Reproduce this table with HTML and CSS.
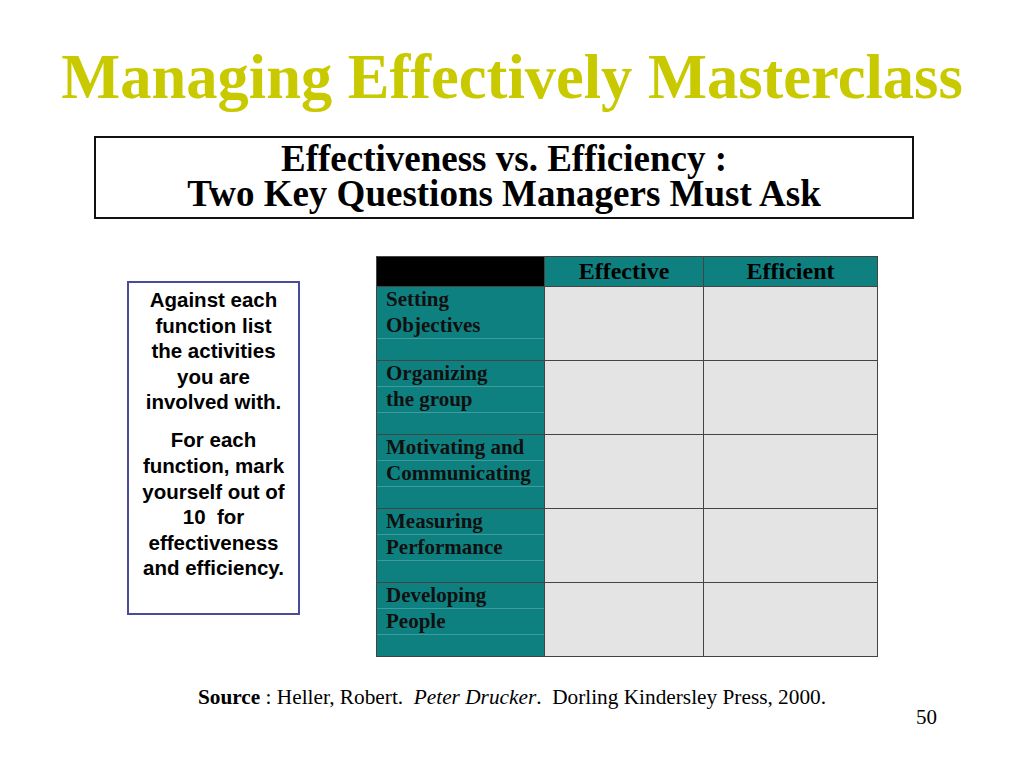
FILE: index.html
```html
<!DOCTYPE html>
<html>
<head>
<meta charset="utf-8">
<link rel="stylesheet" href="styles.css">
</head>
<body>
<div class="slide">
  <h1 class="title">Managing Effectively Masterclass</h1>
  <div class="subtitle">
    <div>Effectiveness vs. Efficiency :</div>
    <div>Two Key Questions Managers Must Ask</div>
  </div>
  <div class="main">
    <div class="note">
      <p>Against each<br>function list<br>the activities<br>you are<br>involved with.</p>
      <p>For each<br>function, mark<br>yourself out of<br>10&nbsp; for<br>effectiveness<br>and efficiency.</p>
    </div>
    <div class="grid">
      <div class="cell hdr-blank"></div>
      <div class="cell hdr">Effective</div>
      <div class="cell hdr">Efficient</div>

      <div class="cell fn first"><div class="sub">Setting</div><div class="sub">Objectives</div><div class="sub"></div></div>
      <div class="cell blank"></div>
      <div class="cell blank"></div>

      <div class="cell fn"><div class="sub">Organizing</div><div class="sub">the group</div><div class="sub"></div></div>
      <div class="cell blank"></div>
      <div class="cell blank"></div>

      <div class="cell fn"><div class="sub">Motivating and</div><div class="sub">Communicating</div><div class="sub"></div></div>
      <div class="cell blank"></div>
      <div class="cell blank"></div>

      <div class="cell fn"><div class="sub">Measuring</div><div class="sub">Performance</div><div class="sub"></div></div>
      <div class="cell blank"></div>
      <div class="cell blank"></div>

      <div class="cell fn"><div class="sub">Developing</div><div class="sub">People</div><div class="sub"></div></div>
      <div class="cell blank"></div>
      <div class="cell blank"></div>
    </div>
  </div>
  <div class="source"><b>Source</b> : Heller, Robert.&nbsp; <i>Peter Drucker</i>.&nbsp; Dorling Kindersley Press, 2000.</div>
  <div class="pagenum">50</div>
</div>
</body>
</html>
```

FILE: styles.css
```css
html, body {
  margin: 0;
  padding: 0;
  background: #ffffff;
}
.slide {
  width: 1024px;
  height: 768px;
  overflow: hidden;
  font-family: "Liberation Serif", "Times New Roman", serif;
  color: #000;
}
.title {
  margin: 0;
  padding-top: 47px;
  font-size: 62.5px;
  line-height: 60px;
  font-weight: bold;
  color: #c9c900;
  text-align: center;
}
.subtitle {
  box-sizing: border-box;
  margin: 29px 0 0 94px;
  width: 820px;
  height: 83px;
  border: 2px solid #111;
  padding-top: 3px;
  font-size: 37px;
  line-height: 35px;
  font-weight: bold;
  text-align: center;
}
.main {
  display: flex;
  align-items: flex-start;
  margin-top: 37px;
}
.note {
  box-sizing: border-box;
  margin: 25px 0 0 127px;
  width: 173px;
  height: 334px;
  border: 2px solid #4b4b9c;
  padding-top: 4px;
  font-family: "Liberation Sans", Arial, sans-serif;
  font-weight: bold;
  font-size: 20.5px;
  line-height: 25.6px;
  text-align: center;
  white-space: nowrap;
}
.note p {
  margin: 0 0 12.4px 0;
}
.grid {
  margin-left: 76px;
  display: grid;
  grid-template-columns: 168px 159px 174px;
  grid-template-rows: 30px repeat(5, 74px);
  border-top: 1px solid #444;
  border-left: 1px solid #444;
}
.cell {
  box-sizing: border-box;
  border-right: 1px solid #444;
  border-bottom: 1px solid #444;
}
.hdr-blank {
  background: #000;
}
.hdr {
  background: #0f8080;
  font-weight: bold;
  font-size: 24px;
  line-height: 29px;
  text-align: center;
}
.blank {
  background: #e4e4e4;
}
.fn {
  background: #0f8080;
  display: flex;
  flex-direction: column;
  font-weight: bold;
  font-size: 21px;
  color: #101010;
  white-space: nowrap;
}
.sub {
  flex: 1;
  padding-left: 9px;
  display: flex;
  align-items: center;
}
.sub:nth-child(1),
.sub:nth-child(2) {
  border-bottom: 1px solid #3d9c9c;
}
.first .sub:nth-child(1) {
  border-bottom-color: transparent;
}
.source {
  margin-top: 29px;
  font-size: 21.3px;
  line-height: 22px;
  text-align: center;
}
.pagenum {
  margin-top: -2px;
  padding-right: 87px;
  font-size: 21px;
  line-height: 22px;
  text-align: right;
}
```
